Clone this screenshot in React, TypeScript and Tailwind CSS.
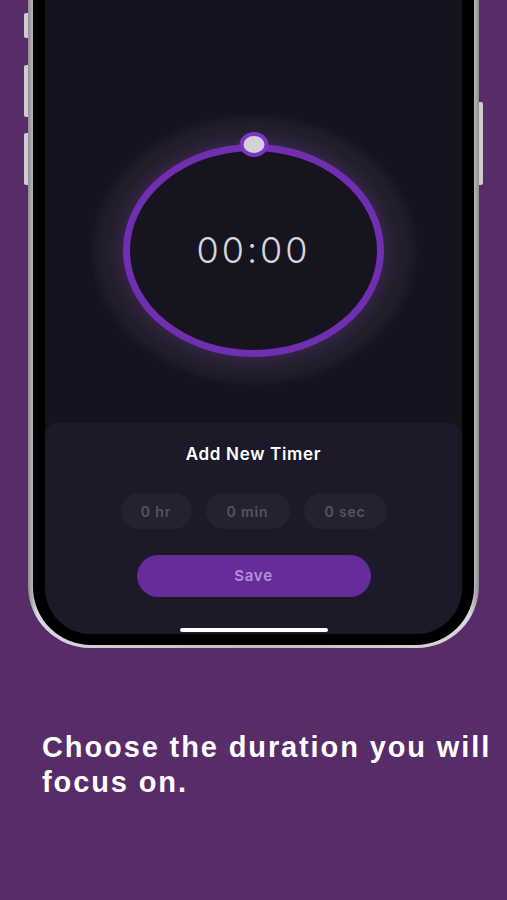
import React from 'react';

const uiFont = { fontFamily: 'Inter, "Noto Sans", sans-serif' };

function SideButtons() {
    return (
        <>
            <div className="absolute left-[-4px] top-[13px] h-[25px] w-[4px] rounded-l-[2px] bg-[#cfcdd3]" />
            <div className="absolute left-[-4px] top-[65px] h-[52px] w-[4px] rounded-l-[2px] bg-[#cfcdd3]" />
            <div className="absolute left-[-4px] top-[133px] h-[52px] w-[4px] rounded-l-[2px] bg-[#cfcdd3]" />
            <div className="absolute right-[-4px] top-[102px] h-[83px] w-[4px] rounded-r-[2px] bg-[#cfcdd3]" />
        </>
    );
}

function TimerDial() {
    return (
        <div className="flex h-[423px] flex-col items-center pt-[113px]">
            <div className="flex h-[274px] w-[330px] items-center justify-center rounded-[50%] bg-[radial-gradient(closest-side,#2d2439_74%,#26212f_82%,#211e2b_92%,#1b1825_97%,#15131f_100%)]">
                <div className="relative flex h-[213px] w-[261px] items-center justify-center rounded-[50%] border-[7px] border-[#6f2fb0] bg-[#16141f] shadow-[0_0_18px_rgba(120,50,180,0.28)]">
                    <div className="absolute left-1/2 top-[-19px] h-[25px] w-[29px] -translate-x-1/2 rounded-[50%] border-[4px] border-[#7a36c2] bg-[#d4d2d9]" />
                    <span className="text-[36px] font-light tracking-[3px] text-[#d6d4dc]" style={uiFont}>
                        00:00
                    </span>
                </div>
            </div>
        </div>
    );
}

function AddTimerPanel() {
    const fields = [
        { label: '0 hr', width: 'w-[71px]' },
        { label: '0 min', width: 'w-[84px]' },
        { label: '0 sec', width: 'w-[83px]' },
    ];

    return (
        <div className="flex flex-1 flex-col items-center rounded-t-[12px] bg-[#1c1a28] pt-[21px]" style={uiFont}>
            <h2 className="text-[17px] font-semibold leading-[20px] tracking-[0.04em] text-white">Add New Timer</h2>
            <div className="mt-[29px] flex gap-[14px]">
                {fields.map(f => (
                    <div
                        key={f.label}
                        className={`flex h-[36px] ${f.width} items-center justify-center rounded-full bg-[#25222f] text-[14px] font-semibold tracking-[0.06em] text-[#56535f]`}
                    >
                        {f.label}
                    </div>
                ))}
            </div>
            <button className="mt-[26px] flex h-[42px] w-[234px] items-center justify-center rounded-full bg-[#672c99] text-[15px] font-semibold tracking-[0.05em] text-[#b88fdc]">
                Save
            </button>
            <div className="mt-[31px] h-[4px] w-[148px] rounded-full bg-white" />
        </div>
    );
}

export default function App() {
    return (
        <div className="h-[900px] w-full overflow-hidden bg-[#582c69]">
            <div className="relative ml-[28px] h-[648px] w-[451px]">
                <SideButtons />
                <div className="h-full rounded-b-[62px] bg-[linear-gradient(90deg,#8f8e93,#d8d7db_2%,#bdbcc1_50%,#d8d7db_98%,#8f8e93)] px-[5px] pb-[3px]">
                    <div className="h-full rounded-b-[58px] bg-black px-[12px] pb-[11px]">
                        <div className="flex h-full flex-col overflow-hidden rounded-b-[46px] bg-[#15131f]">
                            <TimerDial />
                            <AddTimerPanel />
                        </div>
                    </div>
                </div>
            </div>
            <p
                className="mt-[82px] pl-[42px] pr-[4px] text-[29px] font-bold leading-[35px] tracking-[0.065em] text-white"
                style={{ fontFamily: '"Liberation Sans", Arial, sans-serif' }}
            >
                Choose the duration you will focus on.
            </p>
        </div>
    );
}
